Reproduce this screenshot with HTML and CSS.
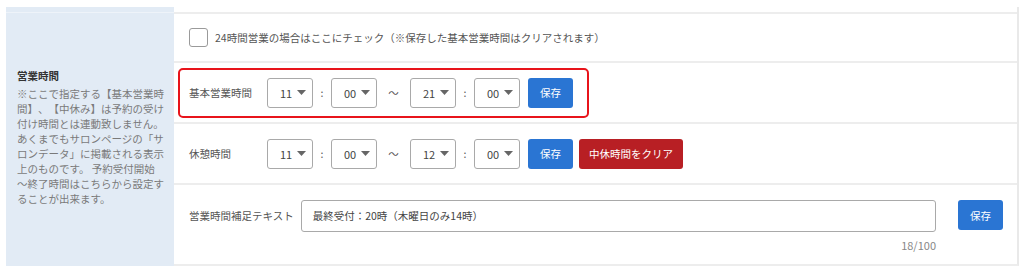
FILE: index.html
```html
<!DOCTYPE html>
<html lang="ja">
<head>
  <meta charset="UTF-8" />
  <meta name="viewport" content="width=device-width, initial-scale=1.0"/>
  <title>営業時間</title>
  <link rel="stylesheet" href="styles.css">
</head>
<body>

<div class="setting">
  <div class="setting-head">
    <p class="head-title">営業時間</p>
    <p class="head-note">※ここで指定する【基本営業時<br>間】、【中休み】は予約の受け<br>付け時間とは連動致しません。<br>あくまでもサロンページの「サ<br>ロンデータ」に掲載される表示<br>上のものです。 予約受付開始<br>〜終了時間はこちらから設定す<br>ることが出来ます。</p>
  </div>

  <div class="setting-body">
    <div class="row row-check">
      <label class="check">
        <span class="check-box"></span>
        24時間営業の場合はここにチェック（※保存した基本営業時間はクリアされます）
      </label>
    </div>

    <div class="row row-basic">
      <div class="highlight">
        <span class="row-label">基本営業時間</span>
        <div class="select"><span>11</span><svg width="9" height="5" viewBox="0 0 9 5"><path d="M0 0h9L4.5 5z" fill="#666"/></svg></div>
        <span class="sep">:</span>
        <div class="select"><span>00</span><svg width="9" height="5" viewBox="0 0 9 5"><path d="M0 0h9L4.5 5z" fill="#666"/></svg></div>
        <span class="sep sep-wave">〜</span>
        <div class="select"><span>21</span><svg width="9" height="5" viewBox="0 0 9 5"><path d="M0 0h9L4.5 5z" fill="#666"/></svg></div>
        <span class="sep">:</span>
        <div class="select"><span>00</span><svg width="9" height="5" viewBox="0 0 9 5"><path d="M0 0h9L4.5 5z" fill="#666"/></svg></div>
        <button class="btn btn-save">保存</button>
      </div>
    </div>

    <div class="row row-break">
      <span class="row-label">休憩時間</span>
      <div class="select"><span>11</span><svg width="9" height="5" viewBox="0 0 9 5"><path d="M0 0h9L4.5 5z" fill="#666"/></svg></div>
      <span class="sep">:</span>
      <div class="select"><span>00</span><svg width="9" height="5" viewBox="0 0 9 5"><path d="M0 0h9L4.5 5z" fill="#666"/></svg></div>
      <span class="sep sep-wave">〜</span>
      <div class="select"><span>12</span><svg width="9" height="5" viewBox="0 0 9 5"><path d="M0 0h9L4.5 5z" fill="#666"/></svg></div>
      <span class="sep">:</span>
      <div class="select"><span>00</span><svg width="9" height="5" viewBox="0 0 9 5"><path d="M0 0h9L4.5 5z" fill="#666"/></svg></div>
      <button class="btn btn-save">保存</button>
      <button class="btn btn-clear">中休時間をクリア</button>
    </div>

    <div class="row row-text">
      <span class="row-label text-label">営業時間補足テキスト</span>
      <div class="text-field">
        <div class="text-input">最終受付：20時（木曜日のみ14時）</div>
        <div class="counter">18/100</div>
      </div>
      <button class="btn btn-save btn-save-text">保存</button>
    </div>
  </div>
</div>

</body>
</html>
```

FILE: styles.css
```css
body {
  margin: 0;
  background: #fff;
  font-family: "Noto Sans CJK JP", "Noto Sans", sans-serif;
  font-size: 10.5px;
  color: #555;
  text-spacing-trim: space-all;
}
.setting {
  display: flex;
  margin: 7px 5px 0 6px;
}
.setting-head {
  width: 168px;
  flex-shrink: 0;
  box-sizing: border-box;
  padding: 0 4px 0 11px;
  background: linear-gradient(#e2ebf5 0 5px, #eef3f9 5px 6px, #e2ebf5 6px);
  display: flex;
  flex-direction: column;
  justify-content: center;
}
.head-title {
  margin: 0 0 3px;
  font-weight: bold;
  color: #333;
  line-height: 15px;
}
.head-note {
  margin: 0;
  color: #7a7a7a;
  line-height: 15px;
  white-space: nowrap;
}
.setting-body {
  flex: 1;
  padding-top: 5px;
  border-right: 2px solid #e9e9e9;
  border-bottom: 2px solid #ededed;
}
.row {
  border-top: 2px solid #ededed;
  display: flex;
  align-items: center;
  padding-left: 15px;
}
.row-check {
  height: 47px;
}
.check {
  display: flex;
  align-items: center;
  color: #555;
}
.check-box {
  width: 17px;
  height: 17px;
  border: 1px solid #9a9a9a;
  border-radius: 3px;
  margin-right: 7px;
  background: #fff;
}
.row-basic {
  height: 59px;
  padding-left: 4px;
}
.highlight {
  display: flex;
  align-items: center;
  height: 46px;
  width: 398px;
  padding-left: 9px;
  border: 2px solid #e8141b;
  border-radius: 5px;
}
.row-break {
  height: 59px;
}
.row-label {
  width: 78px;
  flex-shrink: 0;
  color: #555;
}
.select {
  box-sizing: border-box;
  width: 46px;
  height: 30px;
  flex-shrink: 0;
  border: 1px solid #a9a9a9;
  border-radius: 3px;
  display: flex;
  align-items: center;
  justify-content: space-between;
  padding: 0 6px 0 12px;
  color: #444;
  font-size: 11px;
}
.select span {
  padding-top: 1px;
}
.sep {
  width: 18px;
  flex-shrink: 0;
  text-align: center;
  color: #555;
}
.sep-wave {
  width: 33px;
}
.btn {
  height: 30px;
  flex-shrink: 0;
  border: none;
  border-radius: 3px;
  color: #fff;
  font-family: inherit;
  font-size: 10.5px;
  padding: 0;
  cursor: pointer;
}
.btn-save {
  width: 45px;
  margin-left: 8px;
  background: #2a75d3;
}
.btn-clear {
  width: 104px;
  margin-left: 6px;
  background: #b81f24;
}
.row-text {
  height: 64px;
  padding: 15px 14px 0 15px;
  align-items: flex-start;
}
.text-label {
  width: auto;
  line-height: 32px;
  margin-right: 7px;
}
.text-field {
  flex: 1;
}
.text-input {
  height: 30px;
  line-height: 30px;
  border: 1px solid #a9a9a9;
  border-radius: 3px;
  padding-left: 11px;
  color: #444;
}
.counter {
  margin-top: 6px;
  line-height: 14px;
  text-align: right;
  color: #888;
  font-size: 11px;
}
.btn-save-text {
  margin-left: 22px;
}
```
